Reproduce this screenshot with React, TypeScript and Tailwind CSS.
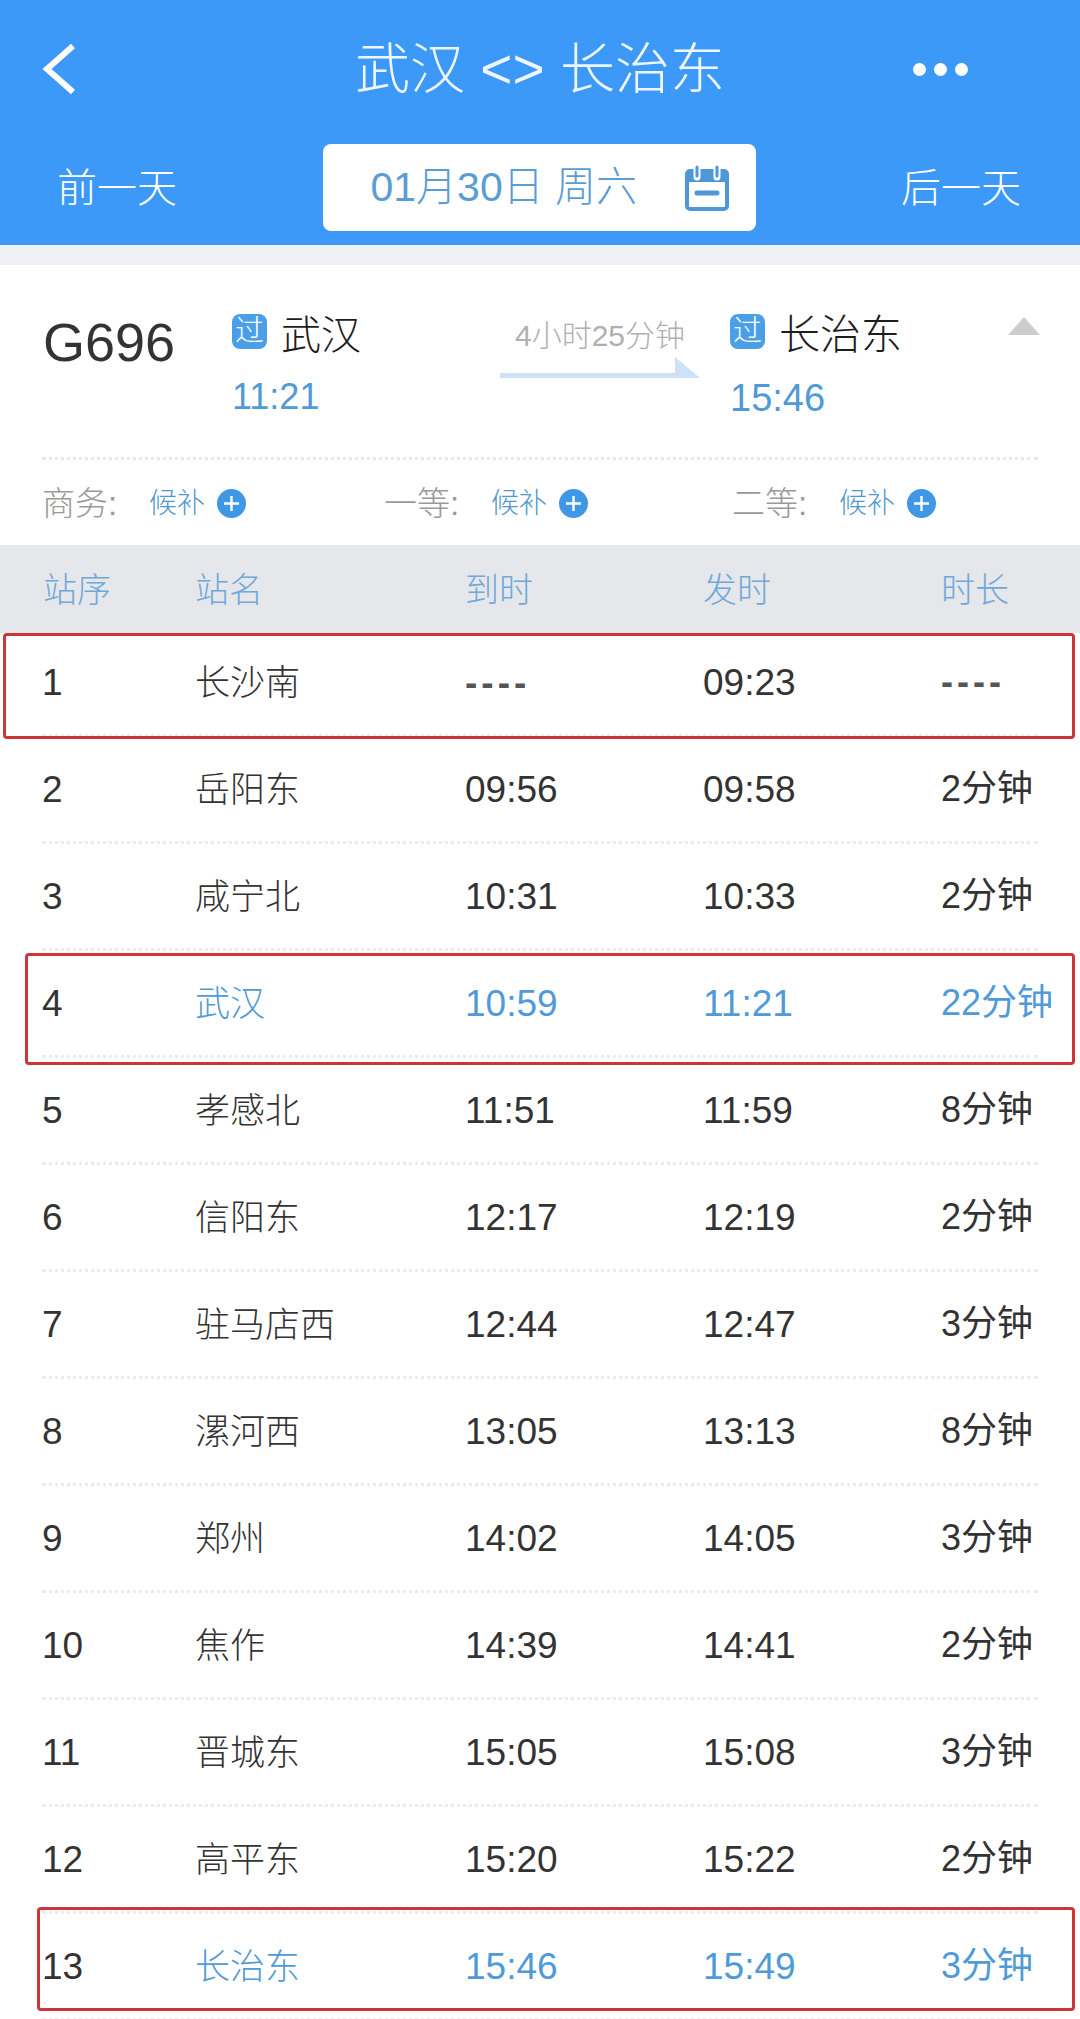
import React from 'react';

const stops = [
  { no: '1', name: '长沙南', arrive: '----', depart: '09:23', stay: '----' },
  { no: '2', name: '岳阳东', arrive: '09:56', depart: '09:58', stay: '2分钟' },
  { no: '3', name: '咸宁北', arrive: '10:31', depart: '10:33', stay: '2分钟' },
  { no: '4', name: '武汉', arrive: '10:59', depart: '11:21', stay: '22分钟', active: true },
  { no: '5', name: '孝感北', arrive: '11:51', depart: '11:59', stay: '8分钟' },
  { no: '6', name: '信阳东', arrive: '12:17', depart: '12:19', stay: '2分钟' },
  { no: '7', name: '驻马店西', arrive: '12:44', depart: '12:47', stay: '3分钟' },
  { no: '8', name: '漯河西', arrive: '13:05', depart: '13:13', stay: '8分钟' },
  { no: '9', name: '郑州', arrive: '14:02', depart: '14:05', stay: '3分钟' },
  { no: '10', name: '焦作', arrive: '14:39', depart: '14:41', stay: '2分钟' },
  { no: '11', name: '晋城东', arrive: '15:05', depart: '15:08', stay: '3分钟' },
  { no: '12', name: '高平东', arrive: '15:20', depart: '15:22', stay: '2分钟' },
  { no: '13', name: '长治东', arrive: '15:46', depart: '15:49', stay: '3分钟', active: true },
];

const PassBadge = () => (
  <span className="mb-[6px] flex h-[35px] w-[35px] items-center justify-center rounded-[8px] bg-[#4a9fe8] text-[29px] font-light leading-none text-white">过</span>
);

const Seat = ({ label, className }: { label: string; className: string }) => (
  <div className={`flex items-center ${className}`}>
    <span className="w-[107px] text-[33px] font-light text-[#9a9a9a]">{label}</span>
    <span className="w-[68px] text-[28px] font-light text-[#4f97cf]">候补</span>
    <span className="flex h-[29px] w-[29px] items-center justify-center rounded-full bg-[#3f97e6]">
      <svg width="17" height="17" viewBox="0 0 17 17">
        <path d="M8.5 1v15M1 8.5h15" stroke="#fff" strokeWidth="2.4" />
      </svg>
    </span>
  </div>
);

// dashes are spaced wider than the digits in the reference
const Cell = ({ value, active, className = '' }: { value: string; active?: boolean; className?: string }) => (
  <span className={`whitespace-nowrap ${className} ${value === '----' ? 'font-bold tracking-[4px] text-[#555555]' : ''} ${active ? 'text-[#4f9ad8]' : ''}`}>{value}</span>
);

export default function App() {
  return (
    <div className="relative h-[2019px] w-[1080px] overflow-hidden bg-white font-['Liberation_Sans','Noto_Sans_CJK_SC',sans-serif]">
      {/* Header */}
      <header className="h-[245px] bg-[#3c99f7] text-white">
        <div className="grid h-[144px] grid-cols-[1fr_auto_1fr] items-center px-[42px] pb-[6px]">
          <svg width="34" height="50" viewBox="0 0 34 50" fill="none">
            <path d="M31 2 5 25l26 23" stroke="#fff" strokeWidth="6" />
          </svg>
          <h1 className="text-[55px] font-light leading-none whitespace-nowrap text-[#eef6ff]">武汉 &lt;&gt; 长治东</h1>
          <div className="flex justify-end gap-[8px] pr-[70px]">
            <span className="h-[13px] w-[13px] rounded-full bg-white" />
            <span className="h-[13px] w-[13px] rounded-full bg-white" />
            <span className="h-[13px] w-[13px] rounded-full bg-white" />
          </div>
        </div>
        <div className="flex items-center justify-between pl-[57px] pr-[59px]">
          <span className="text-[40px] font-light leading-none">前一天</span>
          <div className="flex h-[87px] w-[433px] items-center rounded-[8px] bg-white pl-[48px] text-[#5b9dd3]">
            <span className="w-[314px] text-[41px] font-light leading-none whitespace-nowrap">01月30日 周六</span>
            <svg width="44" height="46" viewBox="0 0 44 46" fill="none">
              <rect x="2" y="6" width="40" height="38" rx="3" fill="#fff" stroke="#4f97d6" strokeWidth="4" />
              <path d="M2 7h40v10H2z" fill="#4f97d6" />
              <path d="M12 1v11M32 1v11" stroke="#fff" strokeWidth="7" strokeLinecap="round" />
              <path d="M12 2v9M32 2v9" stroke="#4f97d6" strokeWidth="3" strokeLinecap="round" />
              <path d="M12 28h20" stroke="#4f97d6" strokeWidth="5" strokeLinecap="round" />
            </svg>
          </div>
          <span className="text-[40px] font-light leading-none">后一天</span>
        </div>
      </header>
      <div className="h-[20px] bg-[#f0f1f4]" />

      {/* Train summary */}
      <section className="relative h-[280px]">
        <div className="flex h-[192px] pl-[43px] pt-[49px]">
          <span className="w-[189px] text-[54px] leading-[56px] text-[#333333]">G696</span>
          <div className="w-[268px]">
            <div className="flex items-center gap-[14px] text-[#1d1d1d]">
              <PassBadge />
              <span className="text-[40px] font-light leading-[40px]">武汉</span>
            </div>
            <div className="mt-[24px] text-[36px] leading-none text-[#4f9ad8]">11:21</div>
          </div>
          <div className="flex w-[230px] flex-col items-center pr-[30px] pt-[7px]">
            <span className="text-[30px] font-light leading-none whitespace-nowrap text-[#b0b0b0]">4小时25分钟</span>
            <svg className="mt-[6px]" width="200" height="21" viewBox="0 0 200 21">
              <path d="M0 16h175V0l25 21H0z" fill="#cfe1f6" />
            </svg>
          </div>
          <div>
            <div className="flex items-center gap-[14px] text-[#1d1d1d]">
              <PassBadge />
              <span className="text-[41px] font-light leading-[40px]">长治东</span>
            </div>
            <div className="mt-[24px] text-[38px] leading-none text-[#4f9ad8]">15:46</div>
          </div>
        </div>
        <div className="absolute right-[40px] top-[52px] h-0 w-0 border-x-[16px] border-b-[18px] border-x-transparent border-b-[#cdcdcd]" />
        <div className="mx-[42px] border-t-[3px] border-dotted border-[#e8e8e8]" />
        <div className="flex items-center pl-[42px] pt-[19px]">
          <Seat label="商务:" className="w-[342px]" />
          <Seat label="一等:" className="w-[348px]" />
          <Seat label="二等:" className="" />
        </div>
      </section>

      {/* Stop table */}
      <div className="grid h-[88px] grid-cols-[152px_270px_238px_238px_1fr] items-center bg-[#e6e7ea] pl-[43px] pt-[2px] text-[34px] font-light text-[#6fa9dc]">
        <span>站序</span>
        <span>站名</span>
        <span>到时</span>
        <span>发时</span>
        <span>时长</span>
      </div>
      <div className="-mt-[3px]">
        {stops.map((s) => (
          <div key={s.no} className="mx-[42px] grid h-[107px] grid-cols-[153px_270px_238px_238px_1fr] items-center border-b-[3px] border-dotted border-[#ececec] text-[37px] leading-none text-[#333333]">
            <span>{s.no}</span>
            <span className={`text-[35px] font-light ${s.active ? 'text-[#4f9ad8]' : ''}`}>{s.name}</span>
            <Cell value={s.arrive} active={s.active} />
            <Cell value={s.depart} active={s.active} />
            <Cell value={s.stay} active={s.active} className="text-[36px]" />
          </div>
        ))}
      </div>

      {/* Hand-drawn red markers over the rows */}
      <div className="absolute left-[3px] top-[633px] h-[106px] w-[1072px] rounded-[4px] border-[3px] border-[#cc3639]" />
      <div className="absolute left-[25px] top-[953px] h-[112px] w-[1050px] rounded-[4px] border-[3px] border-[#cc3639]" />
      <div className="absolute left-[37px] top-[1907px] h-[104px] w-[1038px] rounded-[4px] border-[3px] border-[#cc3639]" />
    </div>
  );
}
